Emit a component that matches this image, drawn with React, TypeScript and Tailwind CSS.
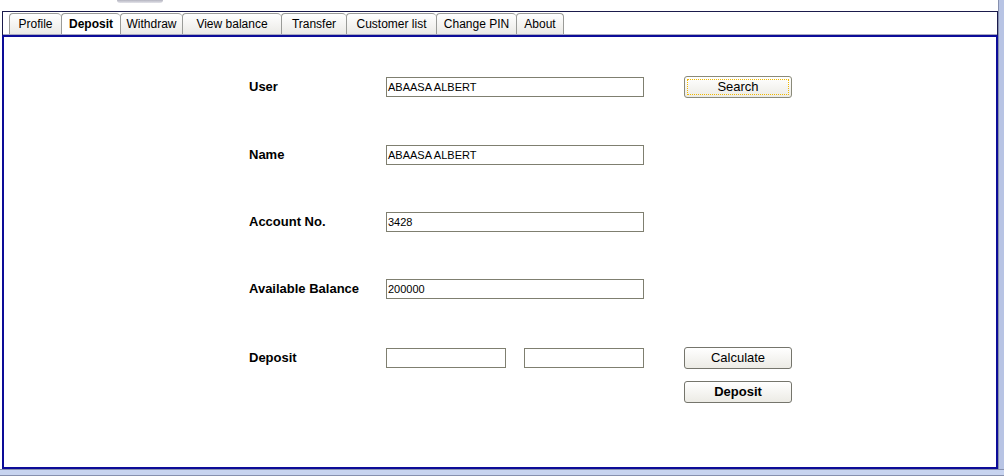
const tabs = [
  { label: 'Profile', w: 'w-[52px]' },
  { label: 'Deposit', w: 'w-[59px]', active: true },
  { label: 'Withdraw', w: 'w-[62px]' },
  { label: 'View balance', w: 'w-[99px]' },
  { label: 'Transfer', w: 'w-[65px]' },
  { label: 'Customer list', w: 'w-[90px]' },
  { label: 'Change PIN', w: 'w-[80px]' },
  { label: 'About', w: 'w-[48px]' },
]

function Field({ value = '', w = 'w-[258px]' }: { value?: string; w?: string }) {
  return (
    <div className={`${w} h-[20px] border border-[#7f7f70] bg-white flex items-center pl-[1px] text-[11px] text-black`}>
      {value}
    </div>
  )
}

function Btn({ children, bold, focus }: { children: string; bold?: boolean; focus?: boolean }) {
  return (
    <div
      className={`w-[108px] h-[22px] rounded-[3px] border bg-gradient-to-b from-white to-[#ecebe5] p-[2px] flex ${
        focus ? 'border-[#8a8a7a]' : 'border-[#75756c]'
      }`}
    >
      <div
        className={`flex-1 flex items-center justify-center text-[13px] text-black ${bold ? 'font-bold' : ''} ${
          focus ? 'border border-dotted border-[#f0b800]' : ''
        }`}
      >
        {children}
      </div>
    </div>
  )
}

function Row({ label, children }: { label: string; children: React.ReactNode }) {
  return (
    <div className="flex items-center h-[22px]">
      <div className="w-[137px] text-[13px] font-bold text-black">{label}</div>
      {children}
    </div>
  )
}

export default function App() {
  return (
    <div className="w-[1004px] h-[476px] bg-white flex flex-col font-['Liberation_Sans',Arial,sans-serif] overflow-hidden">
      <div className="flex h-[469px]">
        <div className="flex-1 flex flex-col pl-[2px]">
          {/* top strip */}
          <div className="h-[11px] pl-[115px]">
            <div className="w-[46px] h-[3px] rounded-b-full bg-gradient-to-b from-[#b4b4c0] to-[#e4e4ea]" />
          </div>

          {/* tab header */}
          <div className="h-[24px] border-t border-l border-r border-[#1b1b4c] flex flex-col">
            <div className="flex-1 flex items-end pl-[6px]">
              {tabs.map((t) => (
                <div
                  key={t.label}
                  className={`${t.w} h-[21px] rounded-t-[4px] border-t border-l last:border-r border-[#9a9b98] flex items-center justify-center text-[12px] text-black ${
                    t.active ? 'bg-white font-bold' : 'bg-gradient-to-b from-white to-[#ebeae6]'
                  }`}
                >
                  {t.label}
                </div>
              ))}
            </div>
            <div className="h-[1px] bg-[#a9a9c0]" />
          </div>

          {/* content panel */}
          <div className="flex-1 border-2 border-[#0c0c98] pl-[245px] pt-[39px] flex flex-col">
            <Row label="User">
              <Field value="ABAASA ALBERT" />
              <div className="ml-[40px]">
                <Btn focus>Search</Btn>
              </div>
            </Row>
            <div className="mt-[46px]">
              <Row label="Name">
                <Field value="ABAASA ALBERT" />
              </Row>
            </div>
            <div className="mt-[45px]">
              <Row label="Account No.">
                <Field value="3428" />
              </Row>
            </div>
            <div className="mt-[45px]">
              <Row label="Available Balance">
                <Field value="200000" />
              </Row>
            </div>
            <div className="mt-[47px]">
              <Row label="Deposit">
                <Field w="w-[120px]" />
                <div className="ml-[18px]">
                  <Field w="w-[120px]" />
                </div>
                <div className="ml-[40px]">
                  <Btn>Calculate</Btn>
                </div>
              </Row>
            </div>
            <div className="mt-[12px] pl-[435px]">
              <Btn bold>Deposit</Btn>
            </div>
          </div>
        </div>
        <div className="w-[6px] border-l border-[#8690ae] bg-[#b8c4e4]" />
      </div>
      <div className="flex-1 border-t border-b border-[#8690ae] bg-[#c8d4f0]" />
    </div>
  )
}
